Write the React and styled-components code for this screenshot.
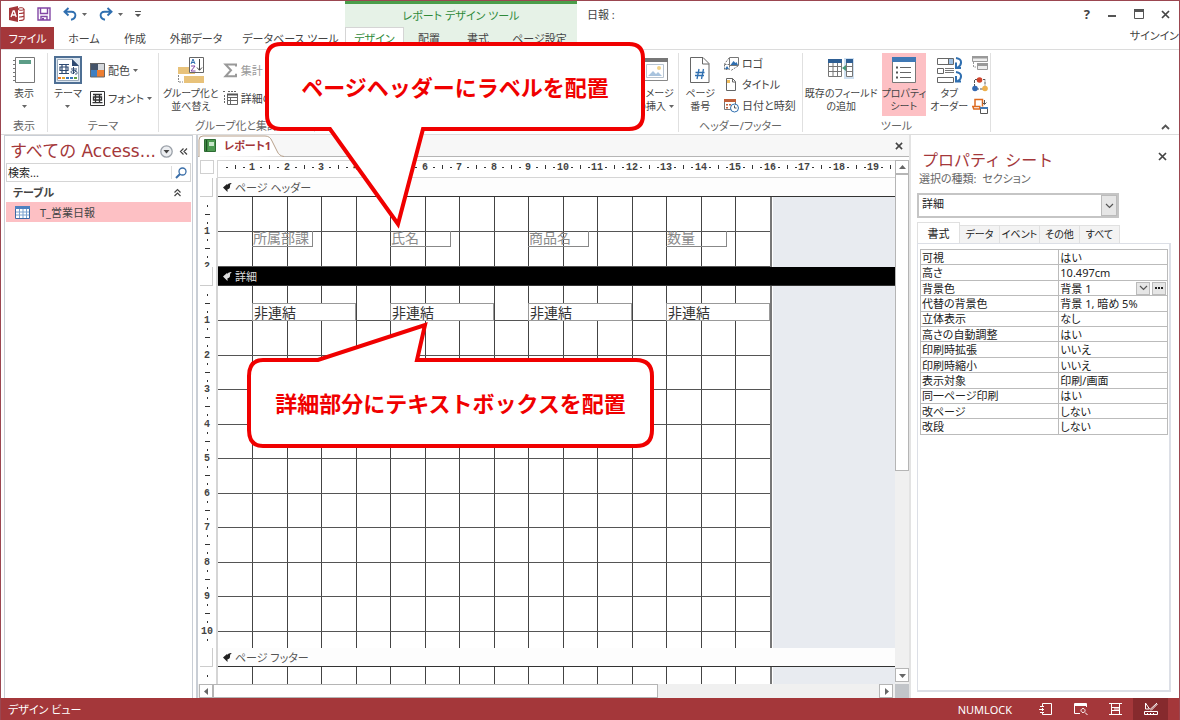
import React, { useState } from 'react'
import styled, { createGlobalStyle } from 'styled-components'

const PITCH = 69 / 2
const at = (n) => Math.floor(n * PITCH)

const properties = [
  ['可視', 'はい'],
  ['高さ', '10.497cm'],
  ['背景色', '背景 1'],
  ['代替の背景色', '背景 1, 暗め 5%'],
  ['立体表示', 'なし'],
  ['高さの自動調整', 'はい'],
  ['印刷時拡張', 'いいえ'],
  ['印刷時縮小', 'いいえ'],
  ['表示対象', '印刷/画面'],
  ['同一ページ印刷', 'はい'],
  ['改ページ', 'しない'],
  ['改段', 'しない'],
]

const fields = [
  { label: '所属部課', col: 1 },
  { label: '氏名', col: 5 },
  { label: '商品名', col: 9 },
  { label: '数量', col: 13 },
]

/* ---------- icons ---------- */

const AccessLogo = () => (
  <svg width="16" height="16" viewBox="0 0 16 16">
    <path d="M0 2 9 0v16L0 14z" fill="#a4373a" />
    <path d="m2 11 2.2-6h1L7.2 11M2.8 9h3.4" stroke="#fff" strokeWidth="1.3" fill="none" />
    <ellipse cx="12" cy="3" rx="3" ry="1.3" fill="none" stroke="#a4373a" />
    <path d="M15 3v10c0 1-2 1.6-5 1.5M15 6c0 1-2 1.6-5 1.5M15 9.500c0 1-2 1.600-5 1.500" fill="none" stroke="#a4373a" strokeWidth="1.2" />
  </svg>
)
const SaveIcon = () => (
  <svg width="14" height="14" viewBox="0 0 14 14" fill="none" stroke="#8246a5" strokeWidth="1.4">
    <path d="M1 1h12v12H1zM3.500 1v5.500h7V1M4 13V9.500h6V13" />
    <path d="M5 11h2v2H5z" fill="#8246a5" stroke="none" />
  </svg>
)
const UndoIcon = ({ flip }) => (
  <svg width="14" height="14" viewBox="0 0 14 14" fill="none" stroke="#2f6fb0" strokeWidth="1.9">
    <g transform={flip ? 'matrix(-1 0 0 1 14 0)' : undefined}>
      <path d="M5.500 1 1.500 4.800l4 3.700M2 4.800h6.500c5.500 0 5 7-.5 8" />
    </g>
  </svg>
)
const Caret = () => (
  <svg width="5" height="3" viewBox="0 0 5 3"><path d="M0 0h5L2.500 3z" fill="#666" /></svg>
)
const CustomizeIcon = () => (
  <svg width="6" height="7" viewBox="0 0 6 7"><path d="M0 0h6v1H0zM0 3h6L3 6z" fill="#555" /></svg>
)
const MinIcon = () => (
  <svg width="10" height="12" viewBox="0 0 10 12"><path d="M1 7h8v2H1z" fill="#555" /></svg>
)
const MaxIcon = () => (
  <svg width="10" height="10" viewBox="0 0 10 10"><path d="M.5.5h9v9h-9z" fill="#fff" stroke="#555" /><path d="M0 0h10v3H0z" fill="#555" /></svg>
)
const CloseIcon = ({ size = 9 }) => (
  <svg width={size} height={size} viewBox="0 0 9 9"><path d="m1 1 7 7M8 1 1 8" stroke="#444" strokeWidth="1.7" /></svg>
)
const ViewIcon = () => (
  <svg width="24" height="28" viewBox="0 0 24 28" fill="none">
    <path d="M3.500 1.500h19v25h-19z" fill="#fff" stroke="#777" />
    <path d="M7 4h12v4H7z" fill="#5c9d87" />
    <path d="M1 4.500h4M1 8.500h4M1 12.500h4M1 16.500h4M1 20.500h4M1 24.500h4" stroke="#777" strokeDasharray="3 1" />
  </svg>
)
const ThemeIcon = () => (
  <svg width="28" height="28" viewBox="0 0 28 28">
    <path d="M1 1h26v26H1z" fill="#dce6f0" stroke="#4e6f94" strokeWidth="2" />
    <path d="M3.500 3.500h15l6 6v15h-21z" fill="#fff" stroke="#9aaabb" />
    <path d="M18 3v7h7z" fill="#2e4a72" />
    <path d="M5 8.500h10M8 8.500v9M12 8.500v9M6 11h8v3.500H6zM5 17.500h10" stroke="#2e4a72" strokeWidth="1.200" fill="none" />
    <path d="M17 13h6M19.500 11v7M22 14c-1 4-5 4-5 2s6-2 6 .5-1 1.500-2 1.500" stroke="#2e4a72" fill="none" />
    <path d="M4 21h3v2H4z" fill="#e8792b" />
    <path d="M8 21h3v2H8z" fill="#e8a72b" />
    <path d="M12 21h3v2h-3z" fill="#3a77bb" />
    <path d="M16 21h3v2h-3z" fill="#3a77bb" />
    <path d="M20 21h3v2h-3z" fill="#61a144" />
  </svg>
)
const ColorsIcon = () => (
  <svg width="15" height="15" viewBox="0 0 15 15">
    <path d="M0 0h8v7H0z" fill="#44546a" />
    <path d="M8 0h7v7H8z" fill="#d5d8dc" />
    <path d="M0 7h7v7H0z" fill="#3f7fc1" />
    <path d="M7 7h8v7H7z" fill="#ed7d31" />
    <path d="M.5.5h14v13.500H.5z" fill="none" stroke="#666" />
  </svg>
)
const FontsIcon = () => (
  <svg width="15" height="15" viewBox="0 0 15 15" fill="none" stroke="#333">
    <path d="M.5.5h14v14H.5z" fill="#fff" />
    <path d="M3 3.500h9M5.500 3.500v8M9.500 3.500v8M3.500 6h8v3h-8zM2.500 11.700h10" strokeWidth="1.300" />
  </svg>
)
const SortIcon = () => (
  <svg width="28" height="28" viewBox="0 0 28 28" fill="none">
    <path d="M1 11h17v7H1zM7 20h20v7H7z" fill="#e8c27a" />
    <path d="M1.500 19v7M2 26h4" stroke="#888" strokeDasharray="2 1" />
    <path d="M12.500 1.500h14v15h-14z" fill="#fff" stroke="#666" />
    <path d="m14 8 2-5 2 5M14.500 6.500h3" stroke="#2f6fb0" />
    <path d="M14 10h4l-4 5h4.500" stroke="#8246a5" />
    <path d="M22.500 3v11M20 11.500l2.500 2.800 2.500-2.800" stroke="#444" />
  </svg>
)
const SigmaIcon = () => (
  <svg width="15" height="15" viewBox="0 0 15 15"><path d="M13 3.500V1.500H2.500L8 7.300l-5.500 6H13v-2.500" fill="none" stroke="#999" strokeWidth="2" /></svg>
)
const DetailIcon = () => (
  <svg width="15" height="14" viewBox="0 0 15 14" fill="none" stroke="#666">
    <path d="M4.500 3.500h10v10h-10zM4.500 6.500h10M7.500 6v7M4.500 9.500h10" />
    <path d="M4 3.500h11" strokeWidth="2" stroke="#555" />
    <path d="M1.500 4v9M0 .5h3M5 .5h9" strokeDasharray="2 1" />
  </svg>
)
const ImageIcon = () => (
  <svg width="28" height="28" viewBox="0 0 28 28">
    <path d="M.5 2.500h26v22H.5z" fill="#fff" stroke="#888" />
    <path d="M0 2h27v4H0z" fill="#777" />
    <path d="M5.500 8.500h17v13h-17z" fill="#fff" stroke="#b8c4d0" />
    <path d="m7 20 5-5 3 3 2-2 4 4z" fill="#a8c3de" />
    <circle cx="18" cy="12" r="2" fill="#f3d286" />
  </svg>
)
const PageNumIcon = () => (
  <svg width="20" height="28" viewBox="0 0 20 28" fill="none">
    <path d="M.5 1.500h12.500l6 6v19H.5z" fill="#fff" stroke="#666" />
    <path d="M12.500 1.500V8H19" stroke="#666" />
    <path d="m9 13-2 10M13.500 13l-2 10M5.500 16.500h9M5 19.500h9" stroke="#2f6fb0" strokeWidth="1.300" />
  </svg>
)
const LogoIcon = () => (
  <svg width="15" height="15" viewBox="0 0 15 15" fill="none">
    <path d="M5.500 1.500h9v8h-9z" fill="#fff" stroke="#777" />
    <path d="m6.500 9 3-4 2 2 1-1 1.500 3z" fill="#2f6fb0" />
    <path d="M.5 8.500h5v5h-5zM5 2 .5 8M14 10l-7 4.500" stroke="#777" strokeDasharray="2 1" />
    <path d="m1 13 2-3 2 3z" fill="#2f6fb0" />
  </svg>
)
const TitleIcon = () => (
  <svg width="15" height="15" viewBox="0 0 15 15" fill="none">
    <path d="M2.500 1.500h6l3 3v9h-9z" fill="#fff" stroke="#666" />
    <path d="M8.500 1.500v3.500h3" stroke="#666" />
    <path d="M3 3h3v3H3z" fill="#f0bd5c" />
  </svg>
)
const DateIcon = () => (
  <svg width="15" height="15" viewBox="0 0 15 15" fill="none">
    <path d="M.5 2.500h11v9H.5z" fill="#fff" stroke="#777" />
    <path d="M0 1h12v3H0z" fill="#c1603a" />
    <path d="M2 6h2v1.500H2zM5 6h2v1.500H5zM2 9h2v1.500H2z" fill="#c1603a" />
    <circle cx="10.500" cy="10" r="4" fill="#fff" stroke="#2f6fb0" />
    <path d="M10.500 7.500V10h2" stroke="#555" />
  </svg>
)
const FieldsIcon = () => (
  <svg width="28" height="28" viewBox="0 0 28 28" fill="none">
    <path d="M17 2h10v21H17z" fill="#cfe0f1" />
    <path d="M1.500 5.500h13v15h-13zM19.500 5.500h6v15h-6z" fill="#fff" stroke="#777" />
    <path d="M1.500 10.500h13M1.500 15.500h13M6 5v15M10.500 5v15M19.500 10.500h6M19.500 15.500h6" stroke="#777" />
    <path d="M1 3h14v4H1zM19 3h7v4h-7z" fill="#2e5f94" />
    <path d="M15 12l4-3v6z" fill="#459a78" />
  </svg>
)
const SheetIcon = () => (
  <svg width="24" height="28" viewBox="0 0 24 28" fill="none">
    <path d="M.5 1.500h23v25H.5z" fill="#fff" stroke="#777" />
    <path d="M0 1h24v5H0z" fill="#3f78b5" />
    <path d="M8 11.500h11M8 16.500h11M8 21.500h11" stroke="#666" />
    <path d="M4 10.500h2v2H4zM4 15.500h2v2H4zM4 20.500h2v2H4z" fill="#555" />
  </svg>
)
const TabOrderIcon = () => (
  <svg width="27" height="28" viewBox="0 0 27 28" fill="none">
    <path d="M13 3h4v6h-4z" fill="#9dc0e4" />
    <path d="M1.500 2.500h16v6h-16zM12.500 3v5M1.500 12.500h6v5h-6zM1.500 21.500h16v5h-16z" stroke="#666" />
    <path d="M9 12.500h9M9 14.500h9M9 16.500h9" stroke="#777" />
    <path d="M20 2c7 1 6 7 1.500 9.500M20 6.500v5.500h5M20 16c7 1 6 7 1.500 9M20 20v5.500h5" stroke="#2f6fb0" strokeWidth="2" />
  </svg>
)
const SubformIcon = () => (
  <svg width="16" height="15" viewBox="0 0 16 15" fill="none">
    <path d="M.5 1.500h15v4H.5zM5.500 8.500h10v5h-10z" fill="#eee" stroke="#999" />
    <path d="M0 0h16v2.500H0zM5 7h11v3H5z" fill="#999" />
    <path d="M1.500 6v5H4" stroke="#999" strokeDasharray="2 1" />
  </svg>
)
const MacroIcon = () => (
  <svg width="16" height="15" viewBox="0 0 16 15" fill="none">
    <path d="M2.500 10V2.500H13V9M4 12h8" stroke="#555" strokeDasharray="3 1" />
    <circle cx="7.500" cy="3" r="2.800" fill="#d0432b" />
    <circle cx="3" cy="11.500" r="2.800" fill="#3468b0" />
    <circle cx="13" cy="11.500" r="2.800" fill="#edb04c" />
  </svg>
)
const ConvertIcon = () => (
  <svg width="16" height="16" viewBox="0 0 16 16" fill="none">
    <path d="M3 8.500V1.500h7.500v7M.8 8.500h7V11h-6z" stroke="#dd6a1f" strokeWidth="1.500" />
    <path d="M12.500 2v4M10.500 4.500l2 2 2-2" stroke="#555" />
    <path d="M8.500 9.500h7v6h-7z" fill="#fff" stroke="#555" />
    <path d="M8 9h8v2H8z" fill="#3f78b5" />
  </svg>
)
const UpIcon = () => (
  <svg width="9" height="6" viewBox="0 0 9 6"><path d="m1 5 3.500-3.500L8 5" fill="none" stroke="#555" strokeWidth="1.800" /></svg>
)
const PaneMenuIcon = () => (
  <svg width="13" height="13" viewBox="0 0 13 13">
    <circle cx="6.500" cy="6.500" r="5.700" fill="#eceef1" stroke="#9aa0a8" strokeWidth="1.300" />
    <path d="M3.500 5h6l-3 3.500z" fill="#444" />
  </svg>
)
const Double = ({ up }) => (
  <svg width="9" height="9" viewBox="0 0 9 9" fill="none" stroke="#444" strokeWidth="1.200">
    <path d={up ? 'M1.500 4.500 4.500 1.500l3 3M1.500 8 4.500 5l3 3' : 'M4.500 1.500l-3 3 3 3M8 1.500l-3 3 3 3'} />
  </svg>
)
const SearchIcon = () => (
  <svg width="12" height="12" viewBox="0 0 12 12" fill="none" stroke="#3a6ea8">
    <circle cx="7.500" cy="4.500" r="3.500" strokeWidth="1.300" /><path d="M5 7 1 11" strokeWidth="2" />
  </svg>
)
const TableIcon = () => (
  <svg width="15" height="13" viewBox="0 0 15 13">
    <path d="M.5.500h14v12H.5z" fill="#fff" stroke="#3c69a5" />
    <path d="M0 0h15v3H0z" fill="#4f81c0" />
    <path d="M4.500 3v9M8 3v9M11.500 3v9M1 6h13M1 9h13" stroke="#7da2cf" />
  </svg>
)
const ReportIcon = () => (
  <svg width="12" height="13" viewBox="0 0 12 13">
    <path d="M.5.5h11v12H.5z" fill="#4c9a51" stroke="#2d6c33" />
    <path d="M5 3h5v4H5z" fill="#c9e7cb" />
    <path d="M2.500 1v11" stroke="#1d5223" strokeWidth="1.500" />
  </svg>
)
const SectionMark = ({ color }) => (
  <svg width="9" height="9" viewBox="0 0 9 9"><path d="M0 4.500 4 1v1c1-1.500 3-2 5-2-2 1-2 2-2 4 0 1-1 2-2.500 2.200V9z" fill={color} /></svg>
)
const ChevronDown = () => (
  <svg width="9" height="6" viewBox="0 0 9 6"><path d="m1 1 3.500 3.500L8 1" fill="none" stroke="#555" strokeWidth="1.200" /></svg>
)
const Arrow = ({ d }) => (
  <svg width="7" height="7" viewBox="0 0 7 7"><path d={d} fill="#666" /></svg>
)
const statusIcons = [
  'M3.500 4V1.500h9v11h-9V11M1 4.500h4M0 7.500h5M1 10.500h4M3.500 6v3',
  'M12.500 5V1.500h-12v10H6M.5 2.500h12M.5 3.500h12M9 10.500a2 2 0 1 1 .1 0M11 10.500l2.500 2.500',
  'M2.500 1.500h8v11h-8zM0 1.500h13M0 12.500h13M2.500 5.500h8v3h-8zM5 7h5',
  'M1.500 1v6h4zM.5 9.500h13v3H.5zM3.500 11v1M6.500 11v1M9.500 11v1M6 7.500 13 1M7 8.500 13.500 2',
]

/* ---------- page ---------- */

const GlobalStyle = createGlobalStyle`
  * { box-sizing: border-box; }
  body {
    margin: 0;
    font-family: "Noto Sans", "Noto Sans CJK JP", sans-serif;
    font-size: 11px;
    line-height: 13px;
    font-feature-settings: "palt";
    color: #444;
  }
  button, input, select { font: inherit; color: inherit; font-feature-settings: inherit; }
  button { padding: 0; border: 0; background: none; white-space: nowrap; cursor: pointer; }
  svg { display: block; flex: none; }
`
const Window = styled.div`
  position: relative;
  height: 100vh;
  min-height: 480px;
  display: flex;
  flex-direction: column;
  background: #fff;
  border: solid #9b4650;
  border-width: 1px 1px 0;
  overflow: hidden;
`
const Header = styled.header`
  display: flex;
  height: 48px;
`
const HeaderPart = styled.div`
  display: flex;
  flex-direction: column;
  flex: ${(p) => (p.$grow ? 1 : 'none')};
  min-width: 0;
`
const QuickAccess = styled.div`
  display: flex;
  align-items: center;
  gap: 12px;
  height: 26px;
  padding-left: 8px;
`
const Split = styled.span`
  display: flex;
  align-items: center;
  gap: 5px;
`
const TabList = styled.nav`
  display: flex;
  height: 22px;
`
const Tab = styled.button`
  width: ${(p) => p.$w}px;
  color: ${(p) => (p.$file ? '#fff' : p.$active ? '#2f8a3a' : '#444')};
  background: ${(p) => (p.$file ? '#a4373a' : p.$active ? '#fff' : 'transparent')};
  border: ${(p) => (p.$active ? '1px solid #d5d5d5' : '0')};
  border-bottom: 0;
`
const Context = styled.div`
  background: #e6f2e7;
  border-top: 3px solid #4a9e4a;
`
const ContextTitle = styled.div`
  height: 23px;
  line-height: 23px;
  text-align: center;
  color: #2f8a3a;
`
const TitleRow = styled.div`
  display: flex;
  align-items: center;
  height: 26px;
  padding: 0 9px 0 10px;
`
const WindowButtons = styled.div`
  display: flex;
  align-items: center;
  gap: 17px;
  margin-left: auto;
`
const Help = styled.button`
  font-size: 13px;
  font-weight: 700;
`
const SignIn = styled.a`
  align-self: flex-end;
  line-height: 18px;
  color: inherit;
  text-decoration: none;
`
const Ribbon = styled.div`
  display: flex;
  height: 86px;
  border: solid #dcdcdc;
  border-width: 1px 0;
`
const Group = styled.section`
  display: flex;
  flex-direction: column;
  width: ${(p) => p.$w}px;
  margin: 3px 0 2px;
  border-right: 1px solid #e0e0e0;
`
const Tools = styled.div`
  display: flex;
  flex: 1;
  justify-content: ${(p) => p.$justify || 'center'};
  gap: ${(p) => p.$gap || 4}px;
  padding: 0 4px;
`
const GroupName = styled.div`
  text-align: center;
  color: #666;
`
const BigButton = styled.button`
  display: flex;
  flex-direction: column;
  align-items: center;
  gap: 3px;
  height: 63px;
  padding-top: 3px;
  font-size: 10px;
  background: ${(p) => (p.$on ? '#fdc0c4' : 'none')};
`
const BigLabel = styled.span`
  display: flex;
  flex-direction: column;
  align-items: center;
`
const CaretLine = styled.span`
  display: flex;
  align-items: center;
  justify-content: center;
  gap: 3px;
  height: 13px;
`
const SmallTools = styled.div`
  display: flex;
  flex-direction: column;
  gap: ${(p) => p.$gap}px;
  padding-top: ${(p) => p.$top || 3}px;
`
const SmallButton = styled.button`
  display: flex;
  align-items: center;
  gap: 3px;
  color: ${(p) => (p.$off ? '#999' : '#444')};
`
const Collapse = styled.button`
  margin: auto 9px 4px auto;
`
const Workspace = styled.main`
  flex: 1;
  display: flex;
  min-height: 0;
`
const NavPane = styled.aside`
  width: 189px;
  margin-left: 3px;
  padding: 3px 1px 0;
  border: solid #c9ced5;
  border-width: 1px 1px 0;
`
const NavHead = styled.div`
  display: flex;
  align-items: center;
  gap: 6px;
  height: 24px;
  padding: 0 3px 0 4px;
`
const NavTitle = styled.h2`
  flex: 1;
  min-width: 0;
  margin: 0;
  font: 400 17px/24px "DejaVu Sans", "Noto Sans CJK JP", sans-serif;
  color: #a4373a;
  white-space: nowrap;
`
const SearchBox = styled.label`
  display: flex;
  align-items: center;
  height: 19px;
  padding-right: 3px;
  border: 1px solid #d5d5d5;
  input {
    flex: 1;
    min-width: 0;
    padding: 0 1px;
    border: 0;
    border-right: 1px solid #ddd;
    margin-right: 3px;
    outline: 0;
  }
  input::placeholder { color: #222; }
`
const NavGroup = styled.button`
  display: flex;
  align-items: center;
  justify-content: space-between;
  width: 100%;
  height: 20px;
  padding: 0 9px 0 7px;
  font-weight: 700;
`
const NavItem = styled.a`
  display: flex;
  align-items: center;
  gap: 10px;
  height: 20px;
  padding-left: 9px;
  background: #fdc0c4;
  color: inherit;
  text-decoration: none;
`
const Document = styled.section`
  flex: 1;
  display: flex;
  flex-direction: column;
  min-width: 0;
  margin-left: 3px;
  border-left: 2px solid #c9ced5;
  border-right: 2px solid #e3e3e3;
`
const DocBar = styled.div`
  display: flex;
  align-items: center;
  height: 22px;
  background: #f7f7f7;
  border-bottom: 1px solid #b5b5b5;
`
const DocTab = styled.div`
  position: relative;
  display: flex;
  align-items: center;
  gap: 8px;
  width: 88px;
  height: 22px;
  padding-left: 6px;
  font-weight: 700;
  color: #a4373a;
  > svg:first-child { position: absolute; inset: 0; }
  > * { position: relative; }
`
const DocClose = styled.button`
  margin: 0 6px 0 auto;
`
const Designer = styled.div`
  flex: 1;
  display: flex;
  min-height: 0;
  padding-top: 3px;
`
const Sheet = styled.div`
  flex: 1;
  display: flex;
  flex-direction: column;
  min-width: 0;
  padding-left: 2px;
  overflow: hidden;
`
const RulerRow = styled.div`
  display: flex;
  gap: 3px;
  height: 18px;
`
const Corner = styled.div`
  width: 14px;
  height: 14px;
  border: 1px solid #d0d0d0;
`
const TopRuler = styled.div`
  flex: 1;
  height: 18px;
  border: solid #d5d5d5;
  border-width: 1px 0 1px 1px;
  overflow: hidden;
`
const SectionRow = styled.div`
  flex: ${(p) => (p.$grow ? '1 0 0' : 'none')};
  display: flex;
  height: ${(p) => (p.$h ? `${p.$h}px` : 'auto')};
  min-height: 0;
`
const RulerSide = styled.div`
  width: 18px;
  border-right: 2px solid #d5d5d5;
  overflow: hidden;
`
const SectionHandle = styled.div`
  width: 13px;
  height: 19px;
  border: solid #ccc;
  border-width: 0 1px 1px 0;
`
const SectionBar = styled.div`
  flex: 1;
  display: flex;
  align-items: center;
  gap: 3px;
  height: 19px;
  padding-left: 5px;
  color: ${(p) => (p.$on ? '#ddd' : '#555')};
  background: ${(p) => (p.$on ? '#000' : '#fdfdfd')};
  border-bottom: 1px solid #333;
`
const Canvas = styled.div`
  position: relative;
  flex: 1;
  background: #e8ebf0;
  overflow: hidden;
`
const FieldLabel = styled.span`
  position: absolute;
  top: ${at(1)}px;
  width: 61px;
  height: 16px;
  padding-left: 1px;
  border: solid #888;
  border-width: 0 1px 1px 0;
  font-size: 14px;
  line-height: 14px;
  color: #8a8a8a;
`
const FieldBox = styled.input`
  position: absolute;
  top: 17px;
  width: 104px;
  height: 18px;
  padding: 0 1px;
  border: 1px solid #999;
  background: #fff;
  font-size: 14px;
  line-height: 16px;
  color: #333;
`
const VScroll = styled.div`
  display: flex;
  flex-direction: column;
  width: 14px;
  padding-bottom: 2px;
  background: #f0f0f0;
`
const HScroll = styled.div`
  display: flex;
  height: 14px;
  padding-left: 1px;
  background: #f0f0f0;
`
const ScrollButton = styled.button`
  display: grid;
  place-items: center;
  width: 14px;
  height: 14px;
  background: #fff;
  border: 1px solid #b5b5b5;
`
const Thumb = styled.div`
  flex: ${(p) => p.$size} 1 0;
  background: #fff;
  border: 1px solid #b5b5b5;
`
const Track = styled.div`
  flex: ${(p) => p.$size} 1 0;
`
const ScrollCorner = styled.div`
  width: 14px;
  margin-left: 2px;
  background: #c2c5c9;
`
const PropertySheet = styled.aside`
  display: flex;
  flex-direction: column;
  width: 268px;
  padding: 14px 8px 6px 6px;
`
const SheetHead = styled.div`
  display: flex;
  align-items: flex-start;
  justify-content: space-between;
  padding: 0 4px 0 5px;
`
const SheetTitle = styled.h2`
  margin: 0;
  font: 400 16px/22px "Noto Sans", "Noto Sans CJK JP", sans-serif;
  color: #a4373a;
`
const SheetClose = styled.button`
  padding-top: 3px;
`
const SheetKind = styled.div`
  padding-left: 2px;
  line-height: 16px;
  color: #666;
`
const Picker = styled.div`
  position: relative;
  width: 202px;
  margin: 6px 0 4px;
  select {
    appearance: none;
    display: block;
    width: 100%;
    height: 25px;
    padding: 0 3px 4px;
    background: #fff;
    border: 2px solid #c5c5c5;
    border-radius: 0;
    color: #222;
  }
`
const PickerArrow = styled.span`
  position: absolute;
  top: 2px;
  right: 2px;
  display: grid;
  place-items: center;
  width: 16px;
  height: 21px;
  background: #e6e6e6;
  border: 1px solid #bbb;
  pointer-events: none;
`
const SheetTabs = styled.div`
  display: flex;
  align-items: flex-end;
  height: 21px;
`
const SheetTab = styled.button`
  width: ${(p) => (p.$on ? 43 : 40)}px;
  height: ${(p) => (p.$on ? 21 : 18)}px;
  font-size: ${(p) => (p.$on ? 11 : 10)}px;
  background: ${(p) => (p.$on ? '#fff' : '#f3f3f3')};
  border: solid #e0e0e0;
  border-width: ${(p) => (p.$on ? '1px 1px 0' : '1px 1px 0 0')};
  color: #222;
`
const SheetBody = styled.div`
  flex: 1;
  padding: 5px 1px 0 2px;
  border: solid #dcdfe6;
  border-width: 1px 2px 2px 1px;
`
const PropertyTable = styled.table`
  width: 100%;
  height: 186px;
  border-collapse: collapse;
  table-layout: fixed;
  color: #222;
  th, td {
    padding: 0 1px;
    border: 1px solid #bbb;
    font-weight: 400;
    text-align: left;
    line-height: 13px;
    white-space: nowrap;
  }
  th { width: 56%; }
`
const Value = styled.div`
  display: flex;
  justify-content: space-between;
  align-items: center;
  height: 13px;
`
const ValueButtons = styled.span`
  display: flex;
  gap: 2px;
`
const MiniButton = styled.button`
  display: grid;
  place-items: center;
  width: 14px;
  height: 13px;
  background: #e6e6e6;
  border: 1px solid #bbb;
`
const StatusBar = styled.footer`
  display: flex;
  align-items: center;
  height: 22px;
  margin: 0 -1px;
  padding: 0 12px 0 8px;
  background: #a4373a;
  color: #fff;
`
const NumLock = styled.span`
  margin: 0 16px 0 auto;
`
const StatusButton = styled.button`
  display: grid;
  place-items: center;
  width: 35px;
  height: 22px;
  background: ${(p) => (p.$on ? '#862a2d' : 'none')};
`
const Callout = styled.div`
  position: absolute;
  left: ${(p) => p.$x}px;
  top: ${(p) => p.$y}px;
  width: ${(p) => p.$w}px;
  height: ${(p) => p.$h}px;
  display: grid;
  place-items: center;
  padding-bottom: 3px;
  font: 700 22px/30px "Noto Sans CJK JP", sans-serif;
  font-feature-settings: normal;
  color: #f00000;
  white-space: nowrap;
  svg { position: absolute; left: 0; top: 0; overflow: visible; }
  span { position: relative; }
`

const Big = ({ icon, lines, caret, on }) => (
  <BigButton $on={on}>
    {icon}
    <BigLabel>
      {lines.map((line, i) => (
        <CaretLine key={line}>
          {line}
          {caret === 'inline' && i === lines.length - 1 && <Caret />}
        </CaretLine>
      ))}
      {caret === 'below' && <CaretLine><Caret /></CaretLine>}
    </BigLabel>
  </BigButton>
)

const rulerText = { fontFamily: '"Liberation Mono", monospace', fontSize: 10, fontWeight: 700, fill: '#444' }

const HorizontalTicks = () => (
  <svg width="690" height="16">
    {[...Array(20).keys()].map((n) => (
      <g key={n}>
        {n > 0 && <text x={at(n)} y="9" textAnchor="middle" {...rulerText}>{n}</text>}
        <rect x={at(n) + 8} y="6" width="2" height="1" fill="#333" />
        <rect x={at(n) + 17} y="4" width="1" height="4" fill="#333" />
        <rect x={at(n) + 25} y="6" width="2" height="1" fill="#333" />
      </g>
    ))}
  </svg>
)

const VerticalTicks = ({ count }) => (
  <svg width="16" height="100%">
    {[...Array(count).keys()].map((n) => (
      <g key={n}>
        {n > 0 && <text x="7" y={at(n) + 3} textAnchor="middle" {...rulerText}>{n}</text>}
        <rect x="7" y={at(n) + 8} width="1" height="2" fill="#333" />
        <rect x="5" y={at(n) + 17} width="5" height="1" fill="#333" />
        <rect x="7" y={at(n) + 25} width="1" height="2" fill="#333" />
      </g>
    ))}
  </svg>
)

const GridPaper = () => (
  <svg width="556" height="100%" shapeRendering="crispEdges">
    <rect width="555" height="100%" fill="#fff" />
    {[...Array(15).keys()].map((i) => (
      <rect key={i} x={at(i + 1)} width="1" height="100%" fill="#444" />
    ))}
    {[...Array(10).keys()].map((i) => (
      <rect key={i} y={at(i + 1)} width="552" height="1" fill="#555" />
    ))}
    <rect x="552" width="2" height="100%" fill="#777" />
  </svg>
)

const ReportSection = ({ title, on, height, ticks, children }) => (
  <>
    <SectionRow>
      <RulerSide><SectionHandle /></RulerSide>
      <SectionBar $on={on}><SectionMark color={on ? '#ddd' : '#222'} />{title}</SectionBar>
    </SectionRow>
    <SectionRow $h={height} $grow={!height}>
      <RulerSide><VerticalTicks count={ticks} /></RulerSide>
      <Canvas>
        <GridPaper />
        {children}
      </Canvas>
    </SectionRow>
  </>
)

const App = () => {
  const [active, setActive] = useState('書式')
  const [search, setSearch] = useState('')

  return (
    <Window>
      <GlobalStyle />
      <Header>
        <HeaderPart>
          <QuickAccess>
            <AccessLogo />
            <button aria-label="上書き保存"><SaveIcon /></button>
            <Split>
              <button aria-label="元に戻す"><UndoIcon /></button>
              <Caret />
            </Split>
            <Split>
              <button aria-label="やり直し"><UndoIcon flip /></button>
              <Caret />
            </Split>
            <button aria-label="カスタマイズ"><CustomizeIcon /></button>
          </QuickAccess>
          <TabList>
            <Tab $w={53} $file>ファイル</Tab>
            <Tab $w={60}>ホーム</Tab>
            <Tab $w={42}>作成</Tab>
            <Tab $w={80}>外部データ</Tab>
            <Tab $w={109}>データベース ツール</Tab>
          </TabList>
        </HeaderPart>
        <Context>
          <ContextTitle>レポート デザイン ツール</ContextTitle>
          <TabList>
            <Tab $w={59} $active>デザイン</Tab>
            <Tab $w={50}>配置</Tab>
            <Tab $w={48}>書式</Tab>
            <Tab $w={75}>ページ設定</Tab>
          </TabList>
        </Context>
        <HeaderPart $grow>
          <TitleRow>
            日報 :
            <WindowButtons>
              <Help aria-label="ヘルプ">?</Help>
              <button aria-label="最小化"><MinIcon /></button>
              <button aria-label="最大化"><MaxIcon /></button>
              <button aria-label="閉じる"><CloseIcon /></button>
            </WindowButtons>
          </TitleRow>
          <SignIn href="#signin">サインイン</SignIn>
        </HeaderPart>
      </Header>

      <Ribbon>
        <Group $w={47}>
          <Tools><Big icon={<ViewIcon />} lines={['表示']} caret="below" /></Tools>
          <GroupName>表示</GroupName>
        </Group>
        <Group $w={111}>
          <Tools $gap={8}>
            <Big icon={<ThemeIcon />} lines={['テーマ']} caret="below" />
            <SmallTools $gap={13} $top={10}>
              <SmallButton><ColorsIcon />配色<Caret /></SmallButton>
              <SmallButton><FontsIcon />フォント<Caret /></SmallButton>
            </SmallTools>
          </Tools>
          <GroupName>テーマ</GroupName>
        </Group>
        <Group $w={156}>
          <Tools $justify="flex-start">
            <Big icon={<SortIcon />} lines={['グループ化と', '並べ替え']} />
            <SmallTools $gap={13} $top={10}>
              <SmallButton $off><SigmaIcon />集計</SmallButton>
              <SmallButton><DetailIcon />詳細の非表示</SmallButton>
            </SmallTools>
          </Tools>
          <GroupName>グループ化と集計</GroupName>
        </Group>
        <Group $w={364}>
          <Tools $justify="flex-end">
            <Big icon={<ImageIcon />} lines={['イメージ', 'の挿入']} caret="inline" />
          </Tools>
          <GroupName>コントロール</GroupName>
        </Group>
        <Group $w={124}>
          <Tools $gap={9}>
            <Big icon={<PageNumIcon />} lines={['ページ', '番号']} />
            <SmallTools $gap={6}>
              <SmallButton><LogoIcon />ロゴ</SmallButton>
              <SmallButton><TitleIcon />タイトル</SmallButton>
              <SmallButton><DateIcon />日付と時刻</SmallButton>
            </SmallTools>
          </Tools>
          <GroupName>ヘッダー/フッター</GroupName>
        </Group>
        <Group $w={188}>
          <Tools>
            <Big icon={<FieldsIcon />} lines={['既存のフィールド', 'の追加']} />
            <Big icon={<SheetIcon />} lines={['プロパティ', 'シート']} on />
            <Big icon={<TabOrderIcon />} lines={['タブ', 'オーダー']} />
            <SmallTools $gap={6}>
              <SmallButton aria-label="サブレポート"><SubformIcon /></SmallButton>
              <SmallButton aria-label="コードの表示"><MacroIcon /></SmallButton>
              <SmallButton aria-label="マクロの変換"><ConvertIcon /></SmallButton>
            </SmallTools>
          </Tools>
          <GroupName>ツール</GroupName>
        </Group>
        <Collapse aria-label="リボンを折りたたむ"><UpIcon /></Collapse>
      </Ribbon>

      <Workspace>
        <NavPane>
          <NavHead>
            <NavTitle>すべての Access...</NavTitle>
            <button aria-label="カテゴリ"><PaneMenuIcon /></button>
            <button aria-label="閉じる"><Double /></button>
          </NavHead>
          <SearchBox>
            <input aria-label="検索" placeholder="検索..." value={search} onChange={(e) => setSearch(e.target.value)} />
            <SearchIcon />
          </SearchBox>
          <NavGroup>テーブル<Double up /></NavGroup>
          <NavItem href="#table"><TableIcon />T_営業日報</NavItem>
        </NavPane>

        <Document>
          <DocBar>
            <DocTab>
              <svg width="88" height="22"><path d="M1 22V5q0-4 4-4h62q5 0 7 5l5 10q2 5 7 5.500" fill="#fff" stroke="#b9a28c" /></svg>
              <ReportIcon />
              <span>レポート1</span>
            </DocTab>
            <DocClose aria-label="レポートを閉じる"><CloseIcon size={8} /></DocClose>
          </DocBar>
          <Designer>
            <Sheet>
              <RulerRow>
                <Corner />
                <TopRuler><HorizontalTicks /></TopRuler>
              </RulerRow>
              <ReportSection title="ページ ヘッダー" height={70} ticks={3}>
                {fields.map((f) => (
                  <FieldLabel key={f.label} style={{ left: at(f.col) }}>{f.label}</FieldLabel>
                ))}
              </ReportSection>
              <ReportSection title="詳細" on height={362} ticks={11}>
                {fields.map((f) => (
                  <FieldBox key={f.label} style={{ left: at(f.col) }} aria-label={f.label} value="非連結" readOnly />
                ))}
              </ReportSection>
              <ReportSection title="ページ フッター" ticks={1} />
            </Sheet>
            <VScroll>
              <ScrollButton aria-label="上へ"><Arrow d="M0 5h7L3.500 1z" /></ScrollButton>
              <Thumb $size={3} />
              <Track $size={2} />
              <ScrollButton aria-label="下へ"><Arrow d="M0 2h7L3.500 6z" /></ScrollButton>
            </VScroll>
          </Designer>
          <HScroll>
            <ScrollButton aria-label="左へ"><Arrow d="M5 0v7L1 3.500z" /></ScrollButton>
            <Thumb $size={2} />
            <Track $size={1} />
            <ScrollButton aria-label="右へ"><Arrow d="M2 0v7l4-3.500z" /></ScrollButton>
            <ScrollCorner />
          </HScroll>
        </Document>

        <PropertySheet>
          <SheetHead>
            <SheetTitle>プロパティ シート</SheetTitle>
            <SheetClose aria-label="プロパティ シートを閉じる"><CloseIcon /></SheetClose>
          </SheetHead>
          <SheetKind>選択の種類:&nbsp; セクション</SheetKind>
          <Picker>
            <select aria-label="セクション" defaultValue="詳細">
              <option>ページ ヘッダー</option>
              <option>詳細</option>
              <option>ページ フッター</option>
            </select>
            <PickerArrow><ChevronDown /></PickerArrow>
          </Picker>
          <SheetTabs role="tablist">
            {['書式', 'データ', 'イベント', 'その他', 'すべて'].map((name) => (
              <SheetTab key={name} role="tab" $on={name === active} onClick={() => setActive(name)}>{name}</SheetTab>
            ))}
          </SheetTabs>
          <SheetBody>
            <PropertyTable>
              <tbody>
                {properties.map(([name, value]) => (
                  <tr key={name}>
                    <th scope="row">{name}</th>
                    <td>
                      {name === '背景色' ? (
                        <Value>
                          {value}
                          <ValueButtons>
                            <MiniButton aria-label="背景色の一覧"><ChevronDown /></MiniButton>
                            <MiniButton aria-label="背景色の作成">
                              <svg width="8" height="2"><path d="M0 0h2v2H0zM3 0h2v2H3zM6 0h2v2H6z" fill="#222" /></svg>
                            </MiniButton>
                          </ValueButtons>
                        </Value>
                      ) : value}
                    </td>
                  </tr>
                ))}
              </tbody>
            </PropertyTable>
          </SheetBody>
        </PropertySheet>
      </Workspace>

      <StatusBar>
        デザイン ビュー
        <NumLock>NUMLOCK</NumLock>
        {['レポート ビュー', '印刷プレビュー', 'レイアウト ビュー', 'デザイン ビュー'].map((name, i) => (
          <StatusButton key={name} aria-label={name} $on={i === 3}>
            <svg width="14" height="14" viewBox="0 0 14 14" fill="none" stroke="#fff"><path d={statusIcons[i]} /></svg>
          </StatusButton>
        ))}
      </StatusBar>

      <Callout $x={264} $y={41} $w={380} $h={90}>
        <svg width="380" height="90">
          <path
            d="M16 2h348q14 0 14 14v57q0 14-14 14H158L133 182 65 87H16Q2 87 2 73V16Q2 2 16 2z"
            fill="#fff" stroke="#f00000" strokeWidth="4"
          />
        </svg>
        <span>ページヘッダーにラベルを配置</span>
      </Callout>
      <Callout $x={246} $y={357} $w={407} $h={90}>
        <svg width="407" height="90">
          <path
            d="M16 2h55L178-33 170 2h219q16 0 16 16v54q0 16-16 16H16Q2 88 2 72V18Q2 2 16 2z"
            fill="#fff" stroke="#f00000" strokeWidth="4"
          />
        </svg>
        <span>詳細部分にテキストボックスを配置</span>
      </Callout>
    </Window>
  )
}

export default App
